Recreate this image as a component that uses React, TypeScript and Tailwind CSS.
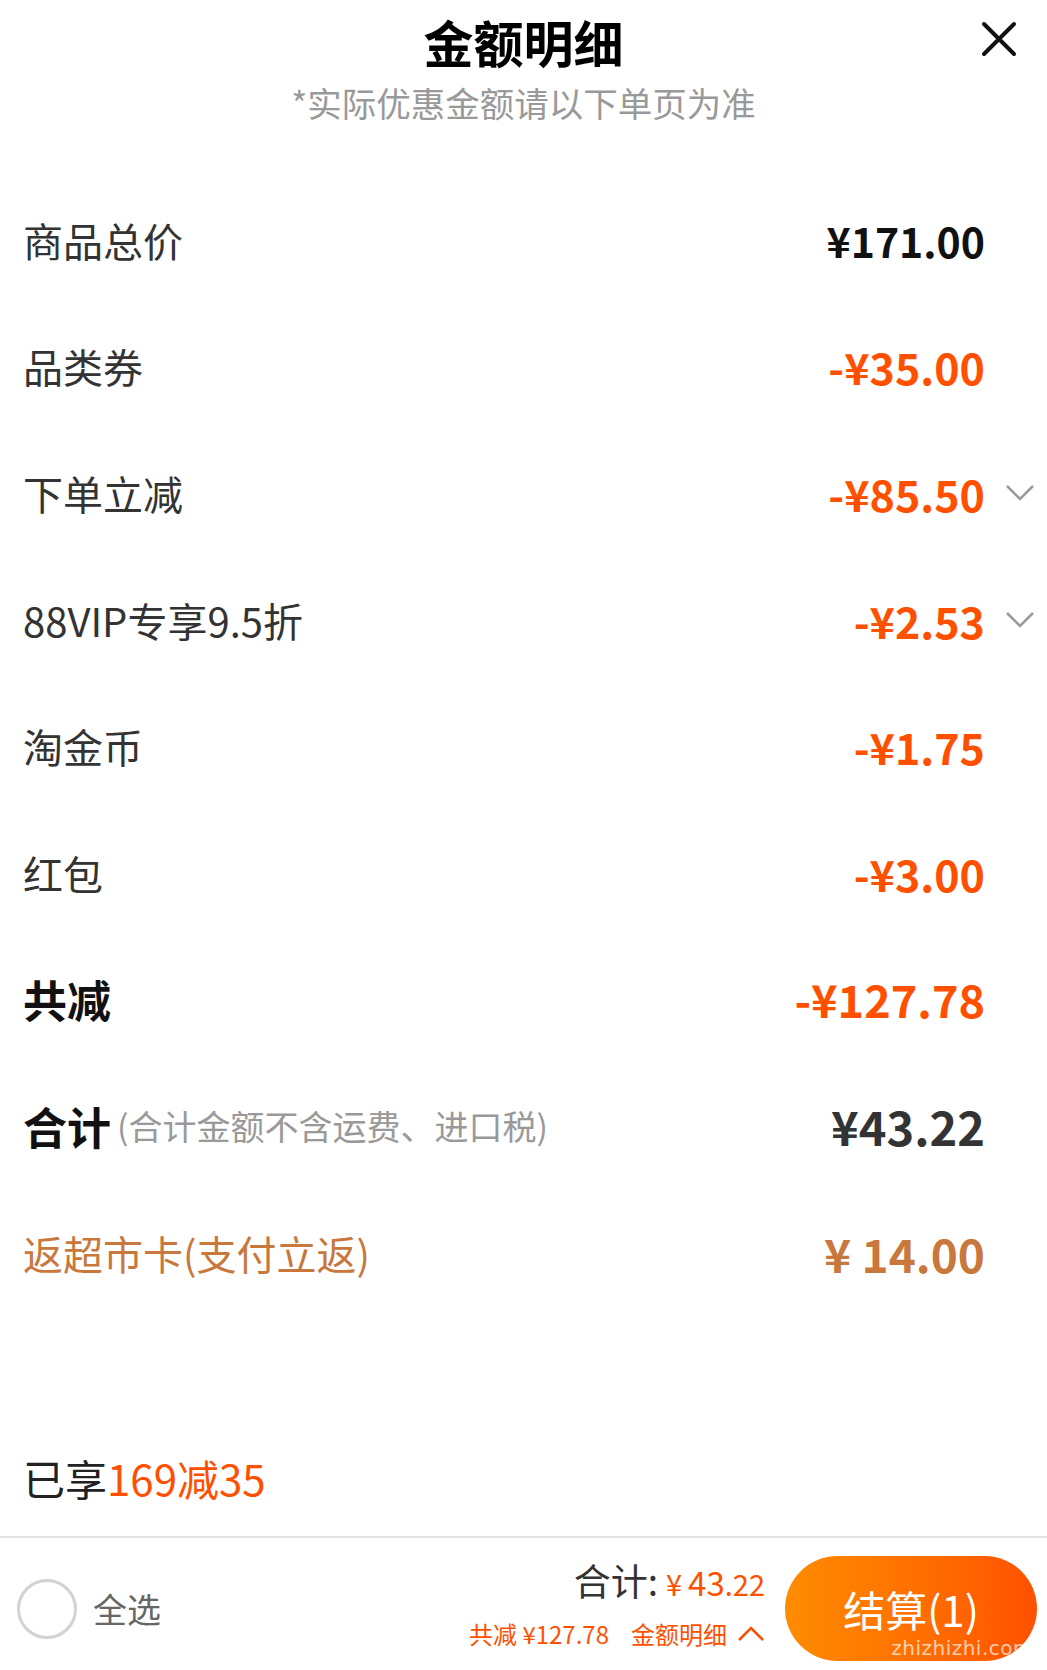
import React from 'react';

const ORANGE = 'text-[#ff5000]';

interface RowProps {
  label: React.ReactNode;
  value: string;
  valueClass: string;
  chevron?: boolean;
}

const ChevronDown = () => (
  <svg width="30" height="18" viewBox="0 0 30 18" className="absolute left-[20px] top-1/2 -translate-y-1/2">
    <path d="M2 2 L15 15 L28 2" fill="none" stroke="#9a9a9a" strokeWidth="2.5" />
  </svg>
);

const Row: React.FC<RowProps> = ({ label, value, valueClass, chevron }) => (
  <div className="flex h-[126.6px] items-center justify-between pl-[23px] pr-[62px]">
    <div className="flex items-center">{label}</div>
    <div className="relative">
      <span className={valueClass}>{value}</span>
      {chevron && (
        <span className="absolute left-full top-1/2 h-0 w-0">
          <ChevronDown />
        </span>
      )}
    </div>
  </div>
);

const labelCls = 'text-[40px] leading-[50px] text-[#333]';
const priceCls = `text-[43px] leading-[50px] font-bold ${ORANGE}`;

export default function App() {
  return (
    <div className="relative w-[1047px] h-[1670px] bg-white overflow-hidden font-['Noto_Sans_CJK_SC',sans-serif]">
      {/* header */}
      <div className="relative pt-[11px]">
        <h1 className="text-center text-[50px] leading-[60px] font-bold text-black">金额明细</h1>
        <p className="mt-[11px] text-center text-[34.5px] leading-[40px] text-[#999]">*实际优惠金额请以下单页为准</p>
        <button className="absolute right-[30px] top-[21px] h-[36px] w-[36px]">
          <svg viewBox="0 0 36 36" width="36" height="36">
            <path d="M3 3 L33 33 M33 3 L3 33" stroke="#111" strokeWidth="4" strokeLinecap="round" />
          </svg>
        </button>
      </div>

      <div className="mt-[54.5px]">
        <Row label={<span className={labelCls}>商品总价</span>} value="¥171.00" valueClass="text-[41px] leading-[50px] font-bold text-[#111]" />
        <Row label={<span className={labelCls}>品类券</span>} value="-¥35.00" valueClass={priceCls} />
        <Row label={<span className={labelCls}>下单立减</span>} value="-¥85.50" valueClass={priceCls} chevron />
        <Row label={<span className={labelCls}>88VIP专享9.5折</span>} value="-¥2.53" valueClass={priceCls} chevron />
        <Row label={<span className={labelCls}>淘金币</span>} value="-¥1.75" valueClass={priceCls} />
        <Row label={<span className={labelCls}>红包</span>} value="-¥3.00" valueClass={priceCls} />
        <Row
          label={<span className="text-[44px] leading-[50px] font-bold text-[#111]">共减</span>}
          value="-¥127.78"
          valueClass={`text-[45px] leading-[50px] font-bold ${ORANGE}`}
        />
        <Row
          label={
            <>
              <span className="text-[44px] leading-[50px] font-bold text-[#111]">合计</span>
              <span className="ml-[6px] text-[34px] leading-[50px] text-[#999]">(合计金额不含运费、进口税)</span>
            </>
          }
          value="¥43.22"
          valueClass="text-[47px] leading-[50px] font-bold text-[#333]"
        />
        <Row
          label={<span className="text-[40px] leading-[50px] text-[#c8783c]">返超市卡(支付立返)</span>}
          value="¥ 14.00"
          valueClass="text-[46px] leading-[50px] font-semibold text-[#c8783c]"
        />
      </div>

      <div className="mt-[137px] pl-[23px] text-[42px] leading-[50px] text-[#222]">
        已享<span className={ORANGE}>169减35</span>
      </div>

      {/* bottom bar */}
      <div className="mt-[33px] border-t-2 border-[#e2e2e2] flex h-[131px] items-center justify-between pt-[13px] pl-[17px] pr-[10px]">
        <div className="flex items-center gap-[16px]">
          <span className="h-[60px] w-[60px] rounded-full border-[3px] border-[#d2d2d2]" />
          <span className="text-[34px] leading-[40px] text-[#666]">全选</span>
        </div>
        <div className="flex items-center gap-[20px]">
          <div className="mb-[10px] flex flex-col items-end">
            <div className="flex items-baseline leading-[44px]">
              <span className="text-[37px] text-[#333]">合计:</span>
              <span className={`ml-[8px] text-[29px] ${ORANGE}`}>¥</span>
              <span className={`ml-[6px] text-[33px] ${ORANGE}`}>43</span>
              <span className={`text-[29px] ${ORANGE}`}>.22</span>
            </div>
            <div className={`mt-[14px] flex items-center text-[24px] leading-[30px] ${ORANGE}`}>
              <span>共减 ¥127.78</span>
              <span className="ml-[22px]">金额明细</span>
              <svg width="28" height="16" viewBox="0 0 28 16" className="ml-[10px]">
                <path d="M2 14 L14 2 L26 14" fill="none" stroke="#ff5000" strokeWidth="2.5" />
              </svg>
            </div>
          </div>
          <button className="relative flex h-[105px] w-[252px] items-center justify-center rounded-full bg-linear-to-r from-[#ff8c00] to-[#ff5000] text-[42px] text-white">
            结算(1)
            <span className="absolute bottom-[2px] right-[4px] text-[20px] leading-[22px] tracking-wide text-white/70 font-['DejaVu_Sans',sans-serif]">zhizhizhi.com</span>
          </button>
        </div>
      </div>
    </div>
  );
}
